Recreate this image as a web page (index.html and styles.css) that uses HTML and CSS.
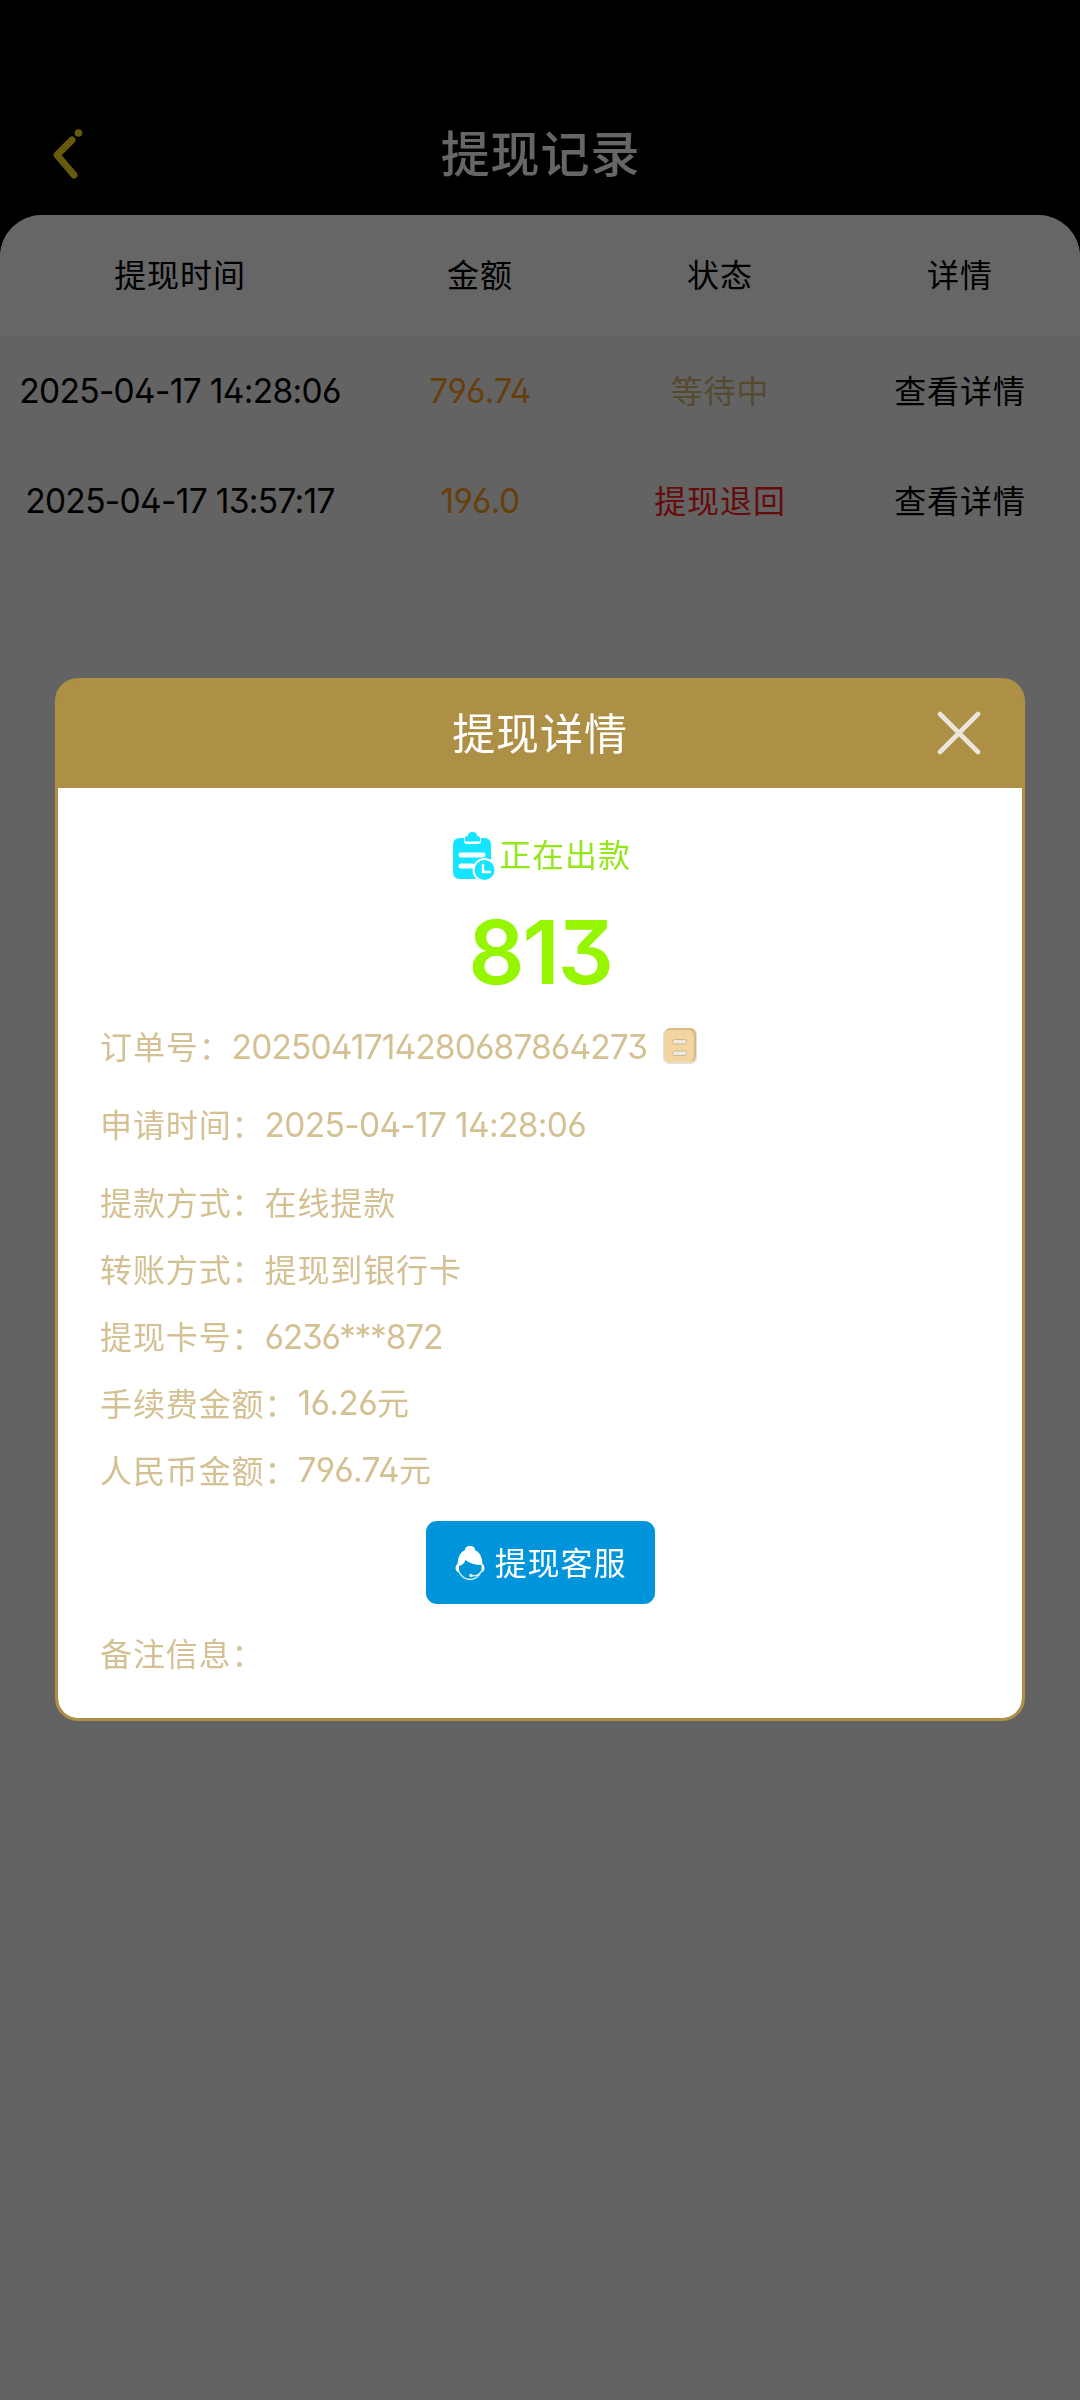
FILE: index.html
```html
<!DOCTYPE html>
<html lang="zh-CN">
<head>
<meta charset="utf-8">
<title>提现记录</title>
<link rel="stylesheet" href="styles.css">
</head>
<body>
<main class="page">
  <header class="navbar">
    <svg class="back" width="40" height="56" viewBox="0 0 40 56" fill="none" stroke="#ffe01f" stroke-linecap="round" stroke-linejoin="round"><path d="M23 14 8 29l17 20" stroke-width="7"/><ellipse cx="29.500" cy="7" rx="3.800" ry="3.800" fill="#ffe01f" stroke="none"/></svg>
    <h1 class="navbar-title">提现记录</h1>
  </header>
  <section class="records">
    <div class="row row-head"><span>提现时间</span><span>金额</span><span>状态</span><span>详情</span></div>
    <div class="row"><span class="num date">2025-04-17 14:28:06</span><span class="num amount">796.74</span><span class="pending">等待中</span><span>查看详情</span></div>
    <div class="row"><span class="num date">2025-04-17 13:57:17</span><span class="num amount">196.0</span><span class="returned">提现退回</span><span>查看详情</span></div>
  </section>
</main>
<div class="overlay">
  <section class="modal">
    <header class="modal-head">
      <h2 class="modal-title">提现详情</h2>
      <svg class="close" width="44" height="44" viewBox="0 0 44 44" stroke="#ebe5dc" stroke-width="4.600" stroke-linecap="round"><path d="M3 3 41 41M41 3 3 41"/></svg>
    </header>
    <div class="modal-body">
      <div class="status">
        <svg width="44" height="50" viewBox="0 0 44 50">
          <path fill="#14e4ff" d="M8 7h4v3q0 3 3 3h11q3 0 3-3V7h3q7 0 7 7v31q0 3-4 3H8q-7 0-7-7V14q0-7 7-7Z"/>
          <path fill="#14e4ff" d="M13 10.500V7q0-2 3-2 0-4 4.500-4T25 5q3 0 3 2v3.500Z"/>
          <path stroke="#fff" stroke-width="5" stroke-linecap="round" d="M9 24h22M9 35h11"/>
          <circle cx="32.500" cy="39" r="12" fill="#fff"/>
          <path fill="#fff" d="M32 51h12V39z"/>
          <circle cx="32.500" cy="39" r="10" fill="#14e4ff"/>
          <path fill="none" stroke="#fff" stroke-width="2.500" stroke-linecap="round" stroke-linejoin="round" d="M31 34v7h7"/>
        </svg>
        <span>正在出款</span>
      </div>
      <div class="total">813</div>
      <dl class="details">
        <div class="item spaced"><dt>订单号：</dt><dd class="num order">2025041714280687864273</dd>
          <svg class="copy" width="38" height="40" viewBox="0 0 38 40">
            <rect x="2" y="2" width="34" height="36" rx="7" fill="#e6dfd3"/>
            <rect x="4" y="2" width="31" height="34" rx="6" fill="#d9b981"/>
            <rect x="3" y="4" width="30" height="32" rx="6" fill="#f3d5a0"/>
            <g fill="#eee9df" stroke="#cdb78f" stroke-width="1"><rect x="11.500" y="13.500" width="14" height="4.500" rx="2"/><rect x="11.500" y="25" width="14" height="4.500" rx="2"/></g>
          </svg>
        </div>
        <div class="item spaced"><dt>申请时间：</dt><dd class="num date">2025-04-17 14:28:06</dd></div>
        <div class="item"><dt>提款方式：</dt><dd>在线提款</dd></div>
        <div class="item"><dt>转账方式：</dt><dd>提现到银行卡</dd></div>
        <div class="item"><dt>提现卡号：</dt><dd class="num card">6236***872</dd></div>
        <div class="item"><dt>手续费金额：</dt><dd><span class="num">16.26</span>元</dd></div>
        <div class="item"><dt>人民币金额：</dt><dd><span class="num">796.74</span>元</dd></div>
      </dl>
      <button class="service" type="button">
        <svg width="32" height="36" viewBox="0 0 32 36">
          <path fill="#fff" d="M11 5q0-4 5-4t5 4q7 3 7.500 14 2 1 2 4t-3 4.500V20Q18 20 11 15q0 4-6 6v6.500Q1.500 26 1.500 23t2-4Q4 8 11 5Z"/>
          <path fill="none" stroke="#dff2fc" stroke-width="1.400" d="M4.500 26q4 8.500 11.500 8.500T27.500 26q-3 5-9 5"/>
          <circle cx="17" cy="30.500" r="1.800" fill="#dff2fc"/>
        </svg>
        <span>提现客服</span>
      </button>
      <div class="item remark">备注信息：</div>
    </div>
  </section>
</div>
</body>
</html>
```

FILE: styles.css
```css
* { box-sizing: border-box; }

body {
  margin: 0;
  background: #f8f8f8;
  color: #000;
  font-family: "Noto Sans CJK SC", sans-serif;
  font-size: 32px;
  line-height: 48px;
  letter-spacing: 0.9px;
}

h1, h2, dl, dt, dd { margin: 0; }

.num {
  font-family: Inter, "Noto Sans CJK SC", sans-serif;
  font-feature-settings: "ss01", "cv09";
  font-size: 33.500px;
  font-weight: 400;
  letter-spacing: -0.6px;
}

.page { min-height: 2400px; background: linear-gradient(#000 300px, #f8f8f8 300px); }

.navbar {
  display: grid;
  grid-template-columns: 1fr auto 1fr;
  align-items: center;
  height: 215px;
  padding: 86px 48px 0 49px;
}

.back { margin-top: 6px; }
.navbar-title { grid-column: 2; color: #fff; font-size: 49px; font-weight: 500; line-height: 72px; }

.records { overflow: hidden; border-radius: 42px 42px 0 0; background: #f8f8f8; }

.row {
  display: grid;
  grid-template-columns: 3fr 2fr 2fr 2fr;
  align-items: center;
  height: 110px;
  padding-bottom: 4px;
  text-align: center;
}

.row .num { padding-top: 4px; }

.row-head { height: 121px; padding-bottom: 5px; background: #fff; }

.amount { color: #ff9f20; }
.pending { color: #d4b878; }
.returned { color: #ff2020; }

.overlay {
  position: fixed;
  inset: 0;
  display: flex;
  align-items: center;
  justify-content: center;
  background: rgba(0, 0, 0, 0.6);
}

.modal {
  width: 970px;
  height: 1043px;
  margin-bottom: 1px;
  overflow: hidden;
  border: 3px solid #ad8f45;
  border-radius: 23px;
  background: #ad8f45;
}

.modal-head {
  display: grid;
  grid-template-columns: 1fr auto 1fr;
  align-items: center;
  height: 107px;
  padding: 0 41px 3px;
}

.modal-title { grid-column: 2; margin-top: -5px; color: #fff; font-size: 43px; font-weight: 400; line-height: 64px; }
.close { justify-self: end; }

.modal-body {
  display: flex;
  flex-direction: column;
  height: 930px;
  padding: 42px 42px 0;
  border-radius: 0 0 20px 20px;
  background: #fff;
  color: #d4c193;
}

.status {
  display: flex;
  align-items: center;
  justify-content: center;
  gap: 3px;
  height: 50px;
  padding-left: 3px;
  color: #96e61e;
}

.status svg { margin-top: 1px; }
.status span { margin-top: -5px; }

.total {
  height: 106px;
  margin-top: 18px;
  padding-top: 1px;
  color: #96f500;
  font-family: Inter, sans-serif;
  font-feature-settings: "ss01", "cv09";
  font-size: 88px;
  font-weight: 560;
  line-height: 106px;
  letter-spacing: -2px;
  text-align: center;
}

.details { display: flex; flex-direction: column; margin-top: 8px; }
.item { display: flex; align-items: center; height: 67px; padding-bottom: 2px; }
.item > .num { padding-top: 4px; }
.spaced { margin-bottom: 11px; }
.date { letter-spacing: -0.67px; }
.order { letter-spacing: -0.87px; }
.card { letter-spacing: -1.2px; }
.copy { margin-top: 3px; margin-left: 14px; }

.service {
  display: flex;
  align-items: center;
  align-self: center;
  justify-content: center;
  gap: 9px;
  width: 229px;
  height: 83px;
  margin-top: 18px;
  border: 0;
  border-radius: 11px;
  background: #0095da;
  color: #fff;
  font: inherit;
  letter-spacing: inherit;
}

.service span { margin-top: -4px; }

.remark { margin-top: 15px; }
```
